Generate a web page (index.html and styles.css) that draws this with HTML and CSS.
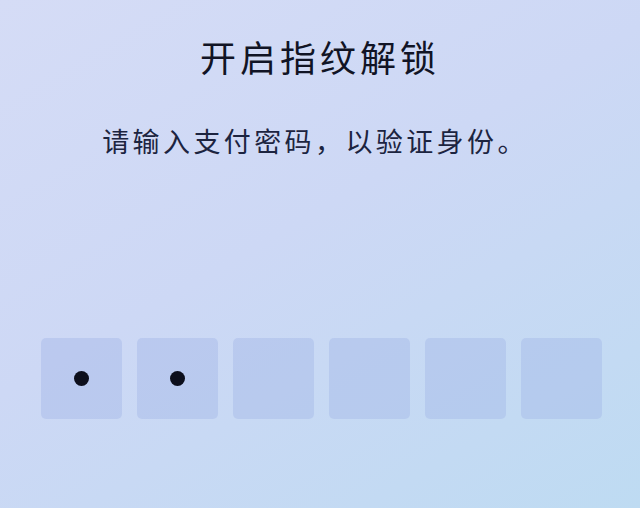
FILE: index.html
```html
<!DOCTYPE html>
<html lang="zh-CN">
<head>
  <meta charset="UTF-8" />
  <meta name="viewport" content="width=device-width, initial-scale=1.0"/>
  <title>开启指纹解锁</title>
  <link rel="stylesheet" href="styles.css">
</head>
<body>

  <div class="screen">
    <h1 class="title">开启指纹解锁</h1>
    <p class="hint">请输入支付密码，以验证身份。</p>

    <!-- 6-digit pay password boxes -->
    <div class="pin">
      <div class="cell filled"><span class="dot"></span></div>
      <div class="cell filled"><span class="dot"></span></div>
      <div class="cell"></div>
      <div class="cell"></div>
      <div class="cell"></div>
      <div class="cell"></div>
    </div>
  </div>

</body>
</html>
```

FILE: styles.css
```css
* {
  box-sizing: border-box;
}

html,
body {
  margin: 0;
  height: 100%;
}

body {
  font-family: "Noto Sans CJK SC", "Noto Sans", sans-serif;
  background: linear-gradient(150deg, #d5dcf6 0%, #cdd8f5 45%, #bedbf2 100%);
  color: #1b1f33;
}

.screen {
  display: flex;
  flex-direction: column;
  align-items: center;
  height: 100%;
}

.title {
  margin: 34px 0 0;
  font-size: 36px;
  line-height: 44px;
  font-weight: 400;
  letter-spacing: 4px;
  color: #111425;
}

.hint {
  margin: 46px 0 0;
  padding-right: 10px;
  font-size: 27px;
  line-height: 34px;
  letter-spacing: 3.4px;
  color: #1c2440;
}

.pin {
  display: flex;
  gap: 15px;
  margin-top: 180px;
  padding-left: 2px;
}

.cell {
  width: 81px;
  height: 81px;
  border-radius: 5px;
  background: rgba(160, 180, 230, 0.4);
  display: flex;
  align-items: center;
  justify-content: center;
}

.dot {
  width: 15px;
  height: 15px;
  border-radius: 50%;
  background: #0d0f1c;
}
```
